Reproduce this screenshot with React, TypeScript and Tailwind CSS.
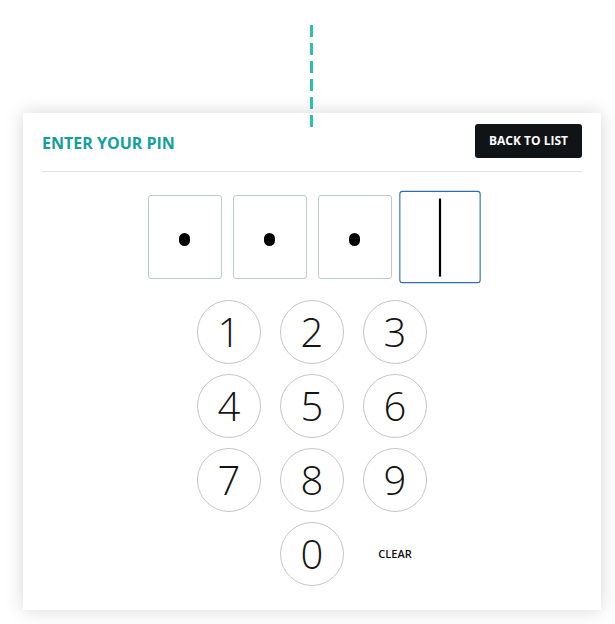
export default function App() {
  const digits = ['1', '2', '3', '4', '5', '6', '7', '8', '9']
  const filled = 3

  return (
    <div className="relative min-h-[624px] bg-white pl-[23px] pt-[113px] font-['Open_Sans',sans-serif]">
      {/* dashed connector above the card */}
      <div className="absolute left-[310px] top-[25px] z-10 h-[102px] w-[3px] bg-[repeating-linear-gradient(to_bottom,#2dbdb3_0_12px,transparent_12px_18px)]" />

      <div className="w-[578px] bg-white px-[19px] pb-[24px] pt-[11px] shadow-[0_0_18px_rgba(0,0,0,0.16)]">
        {/* Header */}
        <div className="flex items-center justify-between border-b border-[#e2e2e2] pb-[13px]">
          <h1 className="pt-[3px] text-[16px] font-bold text-[#13a09a]">ENTER YOUR PIN</h1>
          <button className="h-[34px] w-[107px] rounded-[3px] bg-[#111417] text-[12px] font-bold text-white">
            BACK TO LIST
          </button>
        </div>

        {/* PIN boxes */}
        <div className="mt-[23px] flex justify-center gap-[11px]">
          {[0, 1, 2, 3].map((i) => {
            const active = i === filled
            return (
              <div
                key={i}
                className={
                  active
                    ? 'flex h-[84px] w-[74px] scale-110 items-center justify-center rounded-[3px] border-[1.5px] border-[#2d6db0] bg-white'
                    : 'flex h-[84px] w-[74px] items-center justify-center rounded-[3px] border border-[#b9cccb] bg-white'
                }
              >
                {i < filled && <div className="mt-[4px] h-[13px] w-[11px] rounded-full bg-black" />}
                {active && <div className="h-[71px] w-[1.5px] bg-black" />}
              </div>
            )
          })}
        </div>

        {/* Keypad */}
        <div className="mt-[21px] grid grid-cols-[64px_64px_64px] justify-center gap-x-[19px] gap-y-[10px]">
          {digits.map((d) => (
            <button
              key={d}
              className="flex h-[64px] w-[64px] items-center justify-center rounded-full border border-[#c6c6c6] text-[40px] font-light leading-none text-[#141414]"
            >
              {d}
            </button>
          ))}
          <div />
          <button className="flex h-[64px] w-[64px] items-center justify-center rounded-full border border-[#c6c6c6] text-[40px] font-light leading-none text-[#141414]">
            0
          </button>
          <button className="flex h-[64px] w-[64px] items-center justify-center text-[11px] font-semibold text-[#111]">
            CLEAR
          </button>
        </div>
      </div>
    </div>
  )
}
